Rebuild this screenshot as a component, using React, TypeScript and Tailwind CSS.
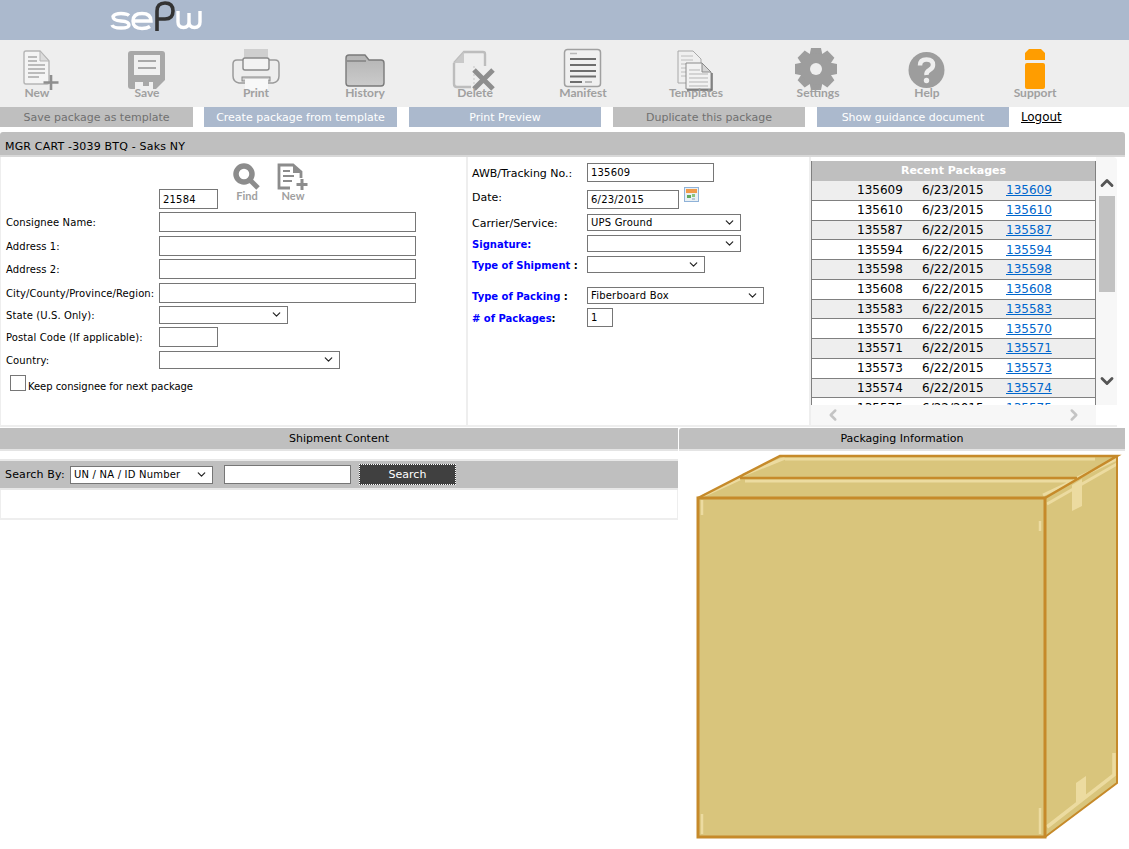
import React from "react";
import { ChevronDown, ChevronUp, ChevronLeft, ChevronRight } from "lucide-react";

const recent: [string, string][] = [
  ["135609", "6/23/2015"], ["135610", "6/23/2015"], ["135587", "6/22/2015"], ["135594", "6/22/2015"],
  ["135598", "6/22/2015"], ["135608", "6/22/2015"], ["135583", "6/22/2015"], ["135570", "6/22/2015"],
  ["135571", "6/22/2015"], ["135573", "6/22/2015"], ["135574", "6/22/2015"], ["135575", "6/22/2015"],
];

const Svg = ({ children }: { children: React.ReactNode }) => (
  <svg viewBox="0 0 60 41" className="w-[60px] h-[41px] overflow-visible" fill="none">{children}</svg>
);

const NewIcon = () => (
  <Svg>
    <path d="M17 7q0-2 2-2h14l9 10v21q0 2-2 2H19q-2 0-2-2z" fill="#f4f4f4" stroke="#b5b5b5" strokeWidth="1.4" />
    <path d="M33 5v10h9z" fill="#dcdcdc" stroke="#b5b5b5" />
    <path d="M21 11h9M21 15h9M21 19h17M21 23h17M21 27h17M21 31h11" stroke="#a8a8a8" strokeWidth="1.6" />
    <path d="M44 29v15M36.500 36.500h15" stroke="#8e8e8e" strokeWidth="2.6" />
  </Svg>
);
const SaveIcon = () => (
  <Svg>
    <path d="M14 5h31q3 0 3 3v26l-9 9H14q-3 0-3-3V8q0-3 3-3z" fill="#a8a8a8" />
    <rect x="17" y="9" width="26" height="20" fill="#f0f0f0" />
    <path d="M21 15h18M21 22h18" stroke="#a8a8a8" strokeWidth="2" />
    <rect x="18" y="36" width="18" height="8" fill="#f0f0f0" />
    <rect x="26" y="36" width="6" height="4" fill="#a8a8a8" />
  </Svg>
);
const PrintIcon = () => (
  <Svg>
    <rect x="18" y="3" width="24" height="15" fill="#cfcfcf" />
    <path d="M11 14h38q4 0 4 4v12q0 6-6 7H13q-6-1-6-7V18q0-4 4-4z" fill="#ededed" stroke="#9a9a9a" strokeWidth="1.5" />
    <rect x="17" y="12" width="26" height="12" rx="2" fill="#f2f2f2" stroke="#8a8a8a" strokeWidth="1.4" />
    <rect x="16" y="31" width="28" height="4" fill="#d0d0d0" stroke="#888" />
    <rect x="19" y="33" width="23" height="11" fill="#f8f8f8" />
  </Svg>
);
const HistoryIcon = () => (
  <Svg>
    <defs>
      <linearGradient id="folder" x1="0" y1="0" x2="0" y2="1">
        <stop offset="0" stopColor="#b4b4b4" />
        <stop offset="1" stopColor="#cbcbcb" />
      </linearGradient>
    </defs>
    <path d="M11 12q0-3 3-3h16l4 5h12q3 0 3 3v20q0 3-3 3H14q-3 0-3-3z" fill="url(#folder)" stroke="#7a7a7a" strokeWidth="1.4" />
    <path d="M12 15h19" stroke="#8f8f8f" strokeWidth="2" />
  </Svg>
);
const DeleteIcon = () => (
  <Svg>
    <path d="M9 17L19 6h19q2 0 2 2v12M9 17v21q0 3 3 3h14" stroke="#bdbdbd" strokeWidth="2.4" fill="none" />
    <path d="M9 17h10V6z" fill="#c9c9c9" />
    <path d="M29 20v18" stroke="#c5c5c5" strokeDasharray="2 2" />
    <path d="M29 24l19 19M48 24L29 43" stroke="#8e8e8e" strokeWidth="5" />
  </Svg>
);
const ManifestIcon = () => (
  <Svg>
    <rect x="11.500" y="3.500" width="36" height="37" rx="3" fill="#f0f0f0" stroke="#a0a0a0" strokeWidth="1.5" />
    <path d="M17 7.500h7" stroke="#b8b8b8" strokeWidth="1.5" />
    <path d="M17 13h26M17 19h26M17 25h26M17 30.500h26" stroke="#6e6e6e" strokeWidth="2" />
    <path d="M17 36h12" stroke="#6e6e6e" strokeWidth="2" />
    <path d="M32 36h7" stroke="#b8b8b8" strokeWidth="2" />
  </Svg>
);
const TemplatesIcon = () => (
  <Svg>
    <path d="M12 5h15l8 8v24H12z" fill="#efefef" stroke="#a8a8a8" />
    <path d="M15 10h12M15 14h12M15 18h12M15 22h12M15 26h12M15 30h12" stroke="#bcbcbc" />
    <path d="M20 17h16l9 9v17H20z" fill="#f2f2f2" stroke="#8a8a8a" />
    <path d="M36 17v9h9z" fill="#d5d5d5" stroke="#8a8a8a" />
    <path d="M23 24h11M23 28h19M23 32h19M23 36h19M23 40h19" stroke="#b5b5b5" />
    <path d="M46 27v17H21" stroke="#6a6a6a" strokeWidth="1.4" />
  </Svg>
);
const SettingsIcon = () => (
  <Svg>
    {[0, 45, 90, 135, 180, 225, 270, 315].map((a) => (
      <path key={a} d="M23 2h10l2 10H21z" fill="#9d9d9d" transform={`rotate(${a} 28 23)`} />
    ))}
    <circle cx="28" cy="23" r="15.500" fill="#9d9d9d" />
    <circle cx="28" cy="23" r="6" fill="#eeeeee" />
  </Svg>
);
const HelpIcon = () => (
  <Svg>
    <circle cx="29.500" cy="24" r="18" fill="#9d9d9d" />
    <path d="M23 19.500q0-6 6.500-6t6.500 5.500q0 3-3.500 5t-3 5" stroke="#eee" strokeWidth="4.500" fill="none" />
    <circle cx="29.500" cy="34.500" r="2.700" fill="#eee" />
  </Svg>
);
const SupportIcon = () => (
  <Svg>
    <path d="M24 3h12l4 4v7H20V7z" fill="#ff9d00" />
    <rect x="20" y="17" width="20" height="26" rx="2" fill="#ff9d00" />
  </Svg>
);

const tools = [
  { label: "New", icon: <NewIcon />, cls: "ml-[7px]" },
  { label: "Save", icon: <SaveIcon />, cls: "ml-[50px]" },
  { label: "Print", icon: <PrintIcon />, cls: "ml-[49px]" },
  { label: "History", icon: <HistoryIcon />, cls: "ml-[49px]" },
  { label: "Delete", icon: <DeleteIcon />, cls: "ml-[50px]" },
  { label: "Manifest", icon: <ManifestIcon />, cls: "ml-[48px]" },
  { label: "Templates", icon: <TemplatesIcon />, cls: "ml-[53px]" },
  { label: "Settings", icon: <SettingsIcon />, cls: "ml-[62px]" },
  { label: "Help", icon: <HelpIcon />, cls: "ml-[49px]" },
  { label: "Support", icon: <SupportIcon />, cls: "ml-[48px]" },
];

const actions = [
  { t: "Save package as template", c: "w-[193px] bg-[#bfbfbf] text-[#707070]" },
  { t: "Create package from template", c: "w-[193px] ml-[11px] bg-[#abb9cd] text-white" },
  { t: "Print Preview", c: "w-[192px] ml-[12px] bg-[#abb9cd] text-white" },
  { t: "Duplicate this package", c: "w-[192px] ml-[12px] bg-[#bfbfbf] text-[#707070]" },
  { t: "Show guidance document", c: "w-[192px] ml-[12px] bg-[#abb9cd] text-white" },
];

const Input = ({ w, h, v, mt }: { w: string; h: string; v?: string; mt?: string }) => (
  <input
    readOnly
    value={v ?? ""}
    className={`${w} ${h} ${mt ?? ""} block border border-[#767676] bg-white px-[3px] text-[10px] tracking-[0.2px] text-black outline-none`}
  />
);

const Select = ({ w, h, v }: { w: string; h: string; v?: string }) => (
  <div className={`${w} ${h} relative shrink-0 border border-[#767676] bg-white`}>
    <div className="pl-[3px] text-[10px] tracking-[0.2px] leading-[15px] text-black whitespace-nowrap">{v ?? "\u00a0"}</div>
    <ChevronDown className="absolute right-[4px] top-[1px] w-[13px] h-[13px] text-[#222]" strokeWidth={2.2} />
  </div>
);

const Row = ({ label, mt, children }: { label: string; mt: string; children: React.ReactNode }) => (
  <div className={`flex items-center ${mt}`}>
    <div className="w-[153px] shrink-0 pt-[2px] text-[10px] leading-[14px] tracking-[0.1px] whitespace-nowrap text-black">{label}</div>
    {children}
  </div>
);

const MidRow = ({ mt, children, field }: { mt: string; children: React.ReactNode; field: React.ReactNode }) => (
  <div className={`flex items-center ${mt}`}>
    <div className="w-[115px] shrink-0 whitespace-nowrap leading-[14px]">{children}</div>
    {field}
  </div>
);

const Blue = ({ t, tail }: { t: string; tail?: string }) => (
  <span className="text-[10px] leading-[14px] font-bold text-[#0000ff]">
    {t}
    {tail && <span className="text-black">{tail}</span>}
  </span>
);

export default function App() {
  return (
    <div className="min-h-[849px] w-[1129px] bg-white font-['DejaVu_Sans',sans-serif] overflow-hidden">
      <header className="h-[40px] bg-[#abb9cd] pl-[110px]">
        <svg viewBox="0 0 94 40" className="w-[94px] h-[40px]" fill="none">
          <path d="M19 15.500q-2-2-8-2t-8 3q0 4 8 4.500t8 4q0 3-8 3t-9-3" stroke="#fff" strokeWidth="3.400" />
          <path d="M23 21h18q0-7.500-9-7.500t-9 7.500q0 7.500 9 7.500q5 0 8-2" stroke="#fff" strokeWidth="3.400" />
          <path d="M47 31V11q0-8 8-8t8 8t-8 8h-7" stroke="#333" strokeWidth="3.600" />
          <path d="M68 11v11q0 5.500 5.500 5.500t5.500-5.500v-9v9q0 5.500 5.500 5.500t5.500-5.500V11" stroke="#fff" strokeWidth="3.400" />
        </svg>
      </header>

      <nav className="h-[67px] bg-[#eeeeee] flex pt-[6px]">
        {tools.map((t) => (
          <div key={t.label} className={`${t.cls} w-[60px] flex flex-col items-center shrink-0`}>
            {t.icon}
            <span className="font-['Lato',sans-serif] font-bold text-[12px] leading-[13px] -mt-[1px] text-[#a0a0a0] whitespace-nowrap">{t.label}</span>
          </div>
        ))}
      </nav>

      <div className="flex h-[20px] items-center">
        {actions.map((a) => (
          <div key={a.t} className={`${a.c} h-[20px] shrink-0 text-center text-[11px] leading-[21px]`}>{a.t}</div>
        ))}
        <a className="ml-[12px] -mt-[1px] text-[12px] leading-[18px] tracking-[-0.1px] text-black underline">Logout</a>
      </div>

      <div className="mt-[5px] w-[1125px] h-[25px] bg-[#bfbfbf] rounded-t-[3px] pl-[5px] text-[11px] tracking-[0.18px] leading-[29px] text-black border-b-[2px] border-[#d8d8d8]">
        MGR CART -3039 BTQ - Saks NY
      </div>

      <div className="flex h-[270px] w-[1125px]">
        <section className="w-[468px] shrink-0 border-l-[1px] border-r-[2px] border-b-[2px] border-[#eeeeee] pl-[5px] relative">
          <div className="flex h-[52px]">
            <div className="w-[153px]" />
            <Input w="w-[59px]" h="h-[20px]" v="21584" mt="mt-[32px]" />
            <div className="ml-[12px] w-[34px] flex flex-col items-center">
              <svg viewBox="0 0 28 28" className="w-[28px] h-[28px] mt-[6px]" fill="none">
                <circle cx="11" cy="11" r="8" stroke="#8c8c8c" strokeWidth="5.500" />
                <path d="M17 17l8 8" stroke="#8c8c8c" strokeWidth="5" />
              </svg>
              <span className="font-['Lato',sans-serif] font-bold text-[11px] leading-[11px] -mt-[1px] text-[#a0a0a0]">Find</span>
            </div>
            <div className="ml-[12px] w-[34px] flex flex-col items-center">
              <svg viewBox="0 0 34 28" className="w-[34px] h-[28px] mt-[6px]" fill="none">
                <path d="M14 25H3V2h14l8 7v6" stroke="#8c8c8c" strokeWidth="2.800" />
                <path d="M17 1l9 9h-9z" fill="#8c8c8c" />
                <path d="M7 8h7M7 13h11M7 18h9" stroke="#8c8c8c" strokeWidth="2" />
                <path d="M26 16v11M20.500 21.500h11" stroke="#8c8c8c" strokeWidth="3" />
              </svg>
              <span className="font-['Lato',sans-serif] font-bold text-[11px] leading-[11px] -mt-[1px] text-[#a0a0a0]">New</span>
            </div>
          </div>
          <Row label="Consignee Name:" mt="mt-[3px]"><Input w="w-[257px]" h="h-[20px]" /></Row>
          <Row label="Address 1:" mt="mt-[4px]"><Input w="w-[257px]" h="h-[20px]" /></Row>
          <Row label="Address 2:" mt="mt-[3px]"><Input w="w-[257px]" h="h-[20px]" /></Row>
          <Row label="City/County/Province/Region:" mt="mt-[4px]"><Input w="w-[257px]" h="h-[20px]" /></Row>
          <Row label="State (U.S. Only):" mt="mt-[3px]"><Select w="w-[129px]" h="h-[18px]" /></Row>
          <Row label="Postal Code (If applicable):" mt="mt-[3px]"><Input w="w-[59px]" h="h-[20px]" /></Row>
          <Row label="Country:" mt="mt-[4px]"><Select w="w-[181px]" h="h-[18px]" /></Row>
          <div className="flex mt-[6px] ml-[4px]">
            <div className="w-[16px] h-[16px] border border-[#767676] bg-white" />
            <span className="ml-[2px] mt-[6px] text-[10px] leading-[12px] tracking-[-0.05px] text-black">Keep consignee for next package</span>
          </div>
        </section>

        <section className="w-[343px] shrink-0 border-r-[2px] border-b-[2px] border-[#eeeeee] pl-[4px]">
          <MidRow mt="mt-[6px]" field={<Input w="w-[127px]" h="h-[19px]" v="135609" />}>
            <span className="text-[11px] leading-[14px] text-black">AWB/Tracking No.:</span>
          </MidRow>
          <MidRow
            mt="mt-[8px]"
            field={
              <div className="flex">
                <Input w="w-[92px]" h="h-[19px]" v="6/23/2015" />
                <svg viewBox="0 0 15 15" className="w-[15px] h-[15px] ml-[5px] -mt-[3px]">
                  <rect width="15" height="15" fill="#8fb2d8" />
                  <rect x="1" y="1" width="13" height="13" fill="#e9f0f4" />
                  <rect x="2" y="2" width="11" height="4" fill="#f09a4a" />
                  <rect x="3" y="8" width="4" height="3" fill="#62a85c" />
                  <rect x="8" y="7" width="3" height="3" fill="#8cc47e" />
                  <rect x="8" y="11" width="3" height="2" fill="#b7c8d4" />
                </svg>
              </div>
            }
          >
            <span className="block -mt-[3px] text-[11px] leading-[14px] text-black">Date:</span>
          </MidRow>
          <MidRow mt="mt-[5px]" field={<Select w="w-[154px]" h="h-[17px]" v="UPS Ground" />}>
            <span className="text-[11px] leading-[14px] text-black">Carrier/Service:</span>
          </MidRow>
          <MidRow mt="mt-[4px]" field={<Select w="w-[154px]" h="h-[17px]" />}>
            <Blue t="Signature:" />
          </MidRow>
          <MidRow mt="mt-[4px]" field={<Select w="w-[118px]" h="h-[17px]" />}>
            <Blue t="Type of Shipment" tail=" :" />
          </MidRow>
          <MidRow mt="mt-[14px]" field={<Select w="w-[177px]" h="h-[17px]" v="Fiberboard Box" />}>
            <Blue t="Type of Packing" tail=" :" />
          </MidRow>
          <MidRow mt="mt-[4px]" field={<Input w="w-[26px]" h="h-[19px]" v="1" />}>
            <Blue t="# of Packages" tail=":" />
          </MidRow>
        </section>

        <section className="w-[306px] shrink-0 flex flex-col border-b-[2px] border-[#eeeeee]">
          <div className="flex h-[248px] pt-[4px]">
            <div className="w-[285px] h-[244px] overflow-hidden border-x border-[#808080]">
              <div className="h-[20px] bg-[#bfbfbf] text-center text-[11px] font-bold leading-[20px] text-white">Recent Packages</div>
              {recent.map(([id, d], i) => (
                <div
                  key={id}
                  className={`h-[19.75px] flex items-center border-b border-[#808080] text-[12px] text-black ${i % 2 === 0 ? "bg-[#eeeeee]" : "bg-white"}`}
                >
                  <span className="ml-[45px] w-[65px]">{id}</span>
                  <span className="w-[84px]">{d}</span>
                  <a className="text-[#0066cc] underline">{id}</a>
                </div>
              ))}
            </div>
            <div className="w-[21px] h-[248px] -mt-[4px] bg-[#f7f7f7] rounded-tr-[4px] flex flex-col items-center">
              <ChevronUp className="w-[20px] h-[20px] mt-[16px] text-[#555]" strokeWidth={3.4} />
              <div className="w-[16px] h-[96px] mt-[3px] bg-[#c2c2c2]" />
              <ChevronDown className="w-[20px] h-[20px] mt-[79px] text-[#555]" strokeWidth={3.4} />
            </div>
          </div>
          <div className="w-[285px] flex-1 bg-[#f7f7f7] flex items-center justify-between px-[13px]">
            <ChevronLeft className="w-[18px] h-[18px] text-[#c4c4c4]" strokeWidth={3.4} />
            <ChevronRight className="w-[18px] h-[18px] text-[#c4c4c4]" strokeWidth={3.4} />
          </div>
        </section>
      </div>

      <div className="flex mt-[1px]">
        <section className="w-[678px] shrink-0">
          <div className="h-[23px] bg-[#bfbfbf] text-center text-[11px] leading-[22px] text-black border-b-[2px] border-[#e4e4e4]">Shipment Content</div>
          <div className="h-[8px]" />
          <div className="h-[31px] bg-[#bfbfbf] border-y-[2px] border-[#e8e8e8] flex items-center pl-[5px]">
            <span className="text-[11px] leading-[14px] tracking-[0.15px] text-black w-[65px] whitespace-nowrap">Search By:</span>
            <Select w="w-[143px]" h="h-[18px]" v="UN / NA / ID Number" />
            <input readOnly value="" className="ml-[11px] w-[127px] h-[19px] border border-[#767676] bg-white outline-none" />
            <button className="ml-[8px] w-[97px] h-[21px] bg-[#404040] pt-[1px] text-white text-[11px] leading-[14px] outline-1 outline-dotted outline-white -outline-offset-1">Search</button>
          </div>
          <div className="h-[30px] border-x-[1px] border-b-[2px] border-[#eeeeee]" />
        </section>
        <section className="w-[446px] ml-[1px] shrink-0">
          <div className="h-[23px] bg-[#bfbfbf] rounded-tl-[3px] text-center text-[11px] leading-[22px] text-black border-b-[2px] border-[#e4e4e4]">Packaging Information</div>
          <svg viewBox="690 450 435 395" className="w-[435px] h-[395px] ml-[11px]" fill="none">
            <path d="M698 497L780 455H1117V782L1045 836H698z" fill="#d9c57c" />
            <path d="M785 457L743 474M703 495L740 478M745 480H1072M785 458H1095M1117 458L1077 477M1077 478L1043 494M1047 503L1117 463" stroke="#ecdba0" strokeWidth="3" />
            <path d="M1072 484L1082 478V505L1072 510z" fill="#ecdba0" />
            <path d="M698 497L780 455H1117L1045 497M740 477H1077" stroke="#c68a2a" strokeWidth="2.500" />
            <path d="M702 499v15M702 813v20M1040 833v-26M1040 520v10" stroke="#ecdba0" strokeWidth="2.500" />
            <path d="M1047 826L1114 774V752" stroke="#ecdba0" strokeWidth="3.500" />
            <path d="M1076 782L1086 775V795L1076 802z" fill="#ecdba0" />
            <path d="M698 497H1045V836H698z" stroke="#c68a2a" strokeWidth="3" />
            <path d="M1117 455V782L1045 836" stroke="#c68a2a" strokeWidth="2" />
          </svg>
        </section>
      </div>
    </div>
  );
}
